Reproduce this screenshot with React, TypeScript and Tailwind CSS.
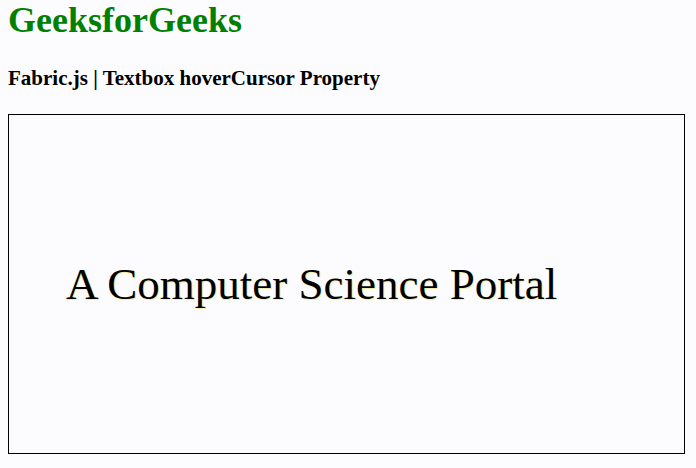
export default function App() {
  return (
    <div className="min-h-screen bg-[#fcfcff] px-2 font-['Liberation_Serif',serif] text-black">
      <h1 className="text-[36px] font-bold leading-[41px] text-[#008000]">GeeksforGeeks</h1>
      <h3 className="mt-[25px] text-[21px] font-bold leading-[24px]">
        Fabric.js | Textbox hoverCursor Property
      </h3>
      {/* fabric canvas */}
      <div className="mt-[24px] h-[340px] w-[677px] border border-black">
        <div className="pl-[57px] pt-[143px]">
          <span className="text-[45px] leading-[52px] [text-shadow:1px_1px_1px_rgba(200,200,0,0.35)]">
            A Computer Science Portal
          </span>
        </div>
      </div>
    </div>
  )
}
